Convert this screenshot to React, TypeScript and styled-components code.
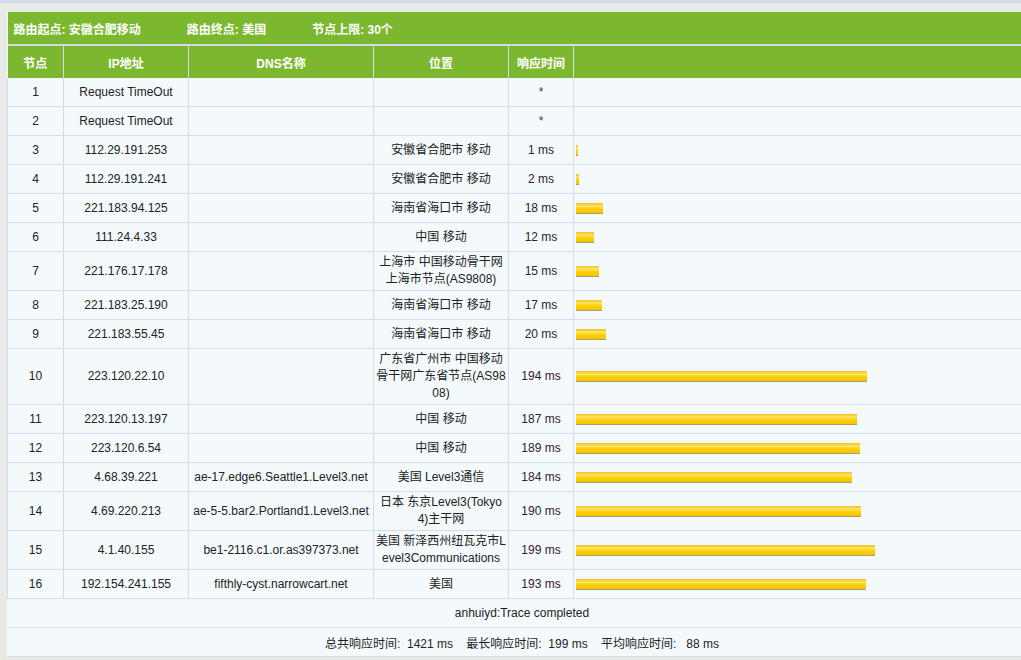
import React from 'react';
import styled, { createGlobalStyle } from 'styled-components';

const Global = createGlobalStyle`
  body {
    margin: 0;
    background: #e8ebe5;
    font-family: "Liberation Sans", "Noto Sans CJK SC", sans-serif;
    font-size: 12px;
    color: #333;
    overflow: hidden;
  }
`;

type Hop = { n: number; ip: string; dns?: string; loc?: string; ms?: number };

const hops: Hop[] = [
  { n: 1, ip: 'Request TimeOut' },
  { n: 2, ip: 'Request TimeOut' },
  { n: 3, ip: '112.29.191.253', loc: '安徽省合肥市 移动', ms: 1 },
  { n: 4, ip: '112.29.191.241', loc: '安徽省合肥市 移动', ms: 2 },
  { n: 5, ip: '221.183.94.125', loc: '海南省海口市 移动', ms: 18 },
  { n: 6, ip: '111.24.4.33', loc: '中国 移动', ms: 12 },
  { n: 7, ip: '221.176.17.178', loc: '上海市 中国移动骨干网上海市节点(AS9808)', ms: 15 },
  { n: 8, ip: '221.183.25.190', loc: '海南省海口市 移动', ms: 17 },
  { n: 9, ip: '221.183.55.45', loc: '海南省海口市 移动', ms: 20 },
  { n: 10, ip: '223.120.22.10', loc: '广东省广州市 中国移动骨干网广东省节点(AS9808)', ms: 194 },
  { n: 11, ip: '223.120.13.197', loc: '中国 移动', ms: 187 },
  { n: 12, ip: '223.120.6.54', loc: '中国 移动', ms: 189 },
  { n: 13, ip: '4.68.39.221', dns: 'ae-17.edge6.Seattle1.Level3.net', loc: '美国 Level3通信', ms: 184 },
  { n: 14, ip: '4.69.220.213', dns: 'ae-5-5.bar2.Portland1.Level3.net', loc: '日本 东京Level3(Tokyo4)主干网', ms: 190 },
  { n: 15, ip: '4.1.40.155', dns: 'be1-2116.c1.or.as397373.net', loc: '美国 新泽西州纽瓦克市Level3Communications', ms: 199 },
  { n: 16, ip: '192.154.241.155', dns: 'fifthly-cyst.narrowcart.net', loc: '美国', ms: 193 },
];

const Page = styled.div`
  border-top: 3px solid #d3dce8;
  padding: 9px 0 0 7px;
`;

const Table = styled.table`
  border-collapse: collapse;
  table-layout: fixed;
  width: 1030px;
  background: #f4fafb;
`;

const TitleCell = styled.td`
  background: #7cb82f;
  color: #fff;
  font-weight: bold;
  height: 32px;
  padding: 0 6px;
  border-bottom: 2px solid #d3dce8;
`;

const Gap = styled.span`
  display: inline-block;
  width: 46px;
`;

const Th = styled.th`
  background: #7cb82f;
  color: #fff;
  font-weight: bold;
  height: 32px;
  padding: 0;
  border-right: 1px solid #d3dce8;
`;

const Td = styled.td`
  height: 24px;
  padding: 2px 1px;
  line-height: 17px;
  text-align: center;
  border: 1px solid #d3dce8;
  border-top: none;
  word-break: break-all;
  color: #222;
`;

const Star = styled.span`
  color: #335;
`;

const Ms = styled.span`
  color: #302030;
`;

const BarCell = styled(Td)`
  text-align: left;
  padding-left: 2px;
`;

const Bar = styled.div`
  height: 10px;
  background: linear-gradient(#f0c020 0%, #ffe46a 30%, #ffd000 60%, #f5c400 100%);
  border-bottom: 1px solid #a89c7a;
`;

const Foot = styled.td`
  text-align: center;
  height: 28px;
  padding: 0;
  border-bottom: 1px solid #d3dce8;
  color: #222;
`;

export default function App() {
  return (
    <Page>
      <Global />
      <Table>
        <colgroup>
          <col style={{ width: 56 }} />
          <col style={{ width: 125 }} />
          <col style={{ width: 185 }} />
          <col style={{ width: 135 }} />
          <col style={{ width: 65 }} />
          <col />
        </colgroup>
        <tbody>
          <tr>
            <TitleCell colSpan={6}>
              路由起点: 安徽合肥移动<Gap />路由终点: 美国<Gap />节点上限: 30个
            </TitleCell>
          </tr>
          <tr>
            <Th>节点</Th>
            <Th>IP地址</Th>
            <Th>DNS名称</Th>
            <Th>位置</Th>
            <Th>响应时间</Th>
            <Th />
          </tr>
          {hops.map((h) => (
            <tr key={h.n}>
              <Td>{h.n}</Td>
              <Td>{h.ip}</Td>
              <Td>{h.dns}</Td>
              <Td>{h.loc}</Td>
              <Td>{h.ms === undefined ? <Star>*</Star> : <Ms>{h.ms} ms</Ms>}</Td>
              <BarCell>
                {h.ms !== undefined && <Bar style={{ width: Math.max(2, h.ms * 1.5) }} />}
              </BarCell>
            </tr>
          ))}
          <tr>
            <Foot colSpan={6}>anhuiyd:Trace completed</Foot>
          </tr>
          <tr>
            <Foot colSpan={6}>
              总共响应时间:&nbsp; 1421 ms&nbsp;&nbsp;&nbsp; 最长响应时间:&nbsp; 199 ms&nbsp;&nbsp;&nbsp; 平均响应时间:&nbsp;&nbsp; 88 ms
            </Foot>
          </tr>
        </tbody>
      </Table>
    </Page>
  );
}
